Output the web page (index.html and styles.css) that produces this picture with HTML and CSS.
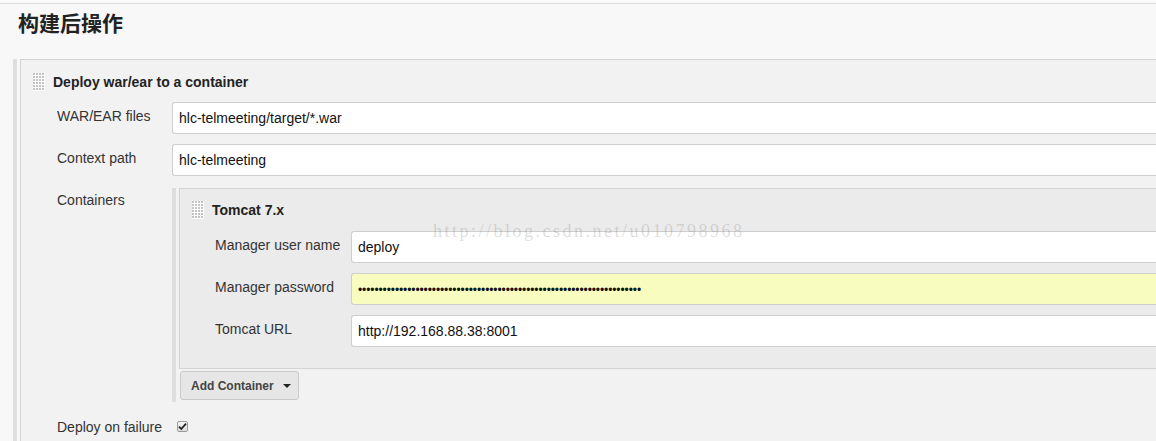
FILE: index.html
```html
<!DOCTYPE html>
<html>
<head>
<meta charset="utf-8">
<link rel="stylesheet" href="styles.css">
</head>
<body>
<div class="page">
  <div class="section-head">
    <h2 class="section-title">构建后操作</h2>
  </div>
  <div class="outer">
    <div class="block">
      <div class="block-head main-head">
        <span class="handle"></span>
        <span class="block-title">Deploy war/ear to a container</span>
      </div>
      <div class="row">
        <div class="label">WAR/EAR files</div>
        <div class="field"><div class="input">hlc-telmeeting/target/*.war</div></div>
      </div>
      <div class="row">
        <div class="label">Context path</div>
        <div class="field"><div class="input">hlc-telmeeting</div></div>
      </div>
      <div class="row row-containers">
        <div class="label">Containers</div>
        <div class="field">
          <div class="sub-outer">
            <div class="sub-block">
              <div class="block-head sub-head">
                <span class="handle"></span>
                <span class="block-title">Tomcat 7.x</span>
              </div>
              <div class="sub-row">
                <div class="sub-label">Manager user name</div>
                <div class="field"><div class="input">deploy</div></div>
              </div>
              <div class="sub-row">
                <div class="sub-label">Manager password</div>
                <div class="field"><div class="input input-pw"><span class="dots">•••••••••••••••••••••••••••••••••••••••••••••••••••••••••••••••••••••</span></div></div>
              </div>
              <div class="sub-row">
                <div class="sub-label">Tomcat URL</div>
                <div class="field"><div class="input">http://192.168.88.38:8001</div></div>
              </div>
            </div>
            <div class="btn-wrap">
              <button class="btn">Add Container <span class="caret"></span></button>
            </div>
          </div>
        </div>
      </div>
      <div class="row row-check">
        <div class="label">Deploy on failure</div>
        <div class="field">
          <span class="checkbox"><svg width="9" height="9" viewBox="0 0 9 9"><path d="M1 4.6 L3.3 7 L8 1.6" fill="none" stroke="#222" stroke-width="1.8"/></svg></span>
        </div>
      </div>
    </div>
  </div>
  <div class="watermark">http://blog.csdn.net/u010798968</div>
</div>
</body>
</html>
```

FILE: styles.css
```css
html, body {
  margin: 0;
  padding: 0;
  overflow: hidden;
  background: #fafafa;
}
.page {
  position: relative;
  width: 1200px;
  height: 441px;
  overflow: hidden;
  font-family: "Liberation Sans", Arial, sans-serif;
  font-size: 14px;
  color: #333;
  padding-top: 3px;
  box-sizing: border-box;
}
.section-head {
  border-top: 1px solid #dcdcdc;
  background: #f8f8f8;
  height: 56px;
  box-sizing: border-box;
  padding: 5px 0 0 18px;
}
.section-title {
  margin: 0;
  font-family: "Noto Sans CJK SC", sans-serif;
  font-size: 21px;
  font-weight: bold;
  line-height: 26px;
  color: #222;
}
.outer {
  background: #f8f8f8;
  padding-left: 13px;
  height: 400px;
}
.block {
  border-left: 4px solid #dedede;
  padding-left: 3px;
  height: 100%;
  box-sizing: border-box;
}
.block-head {
  display: flex;
  align-items: center;
  height: 18px;
}
.handle {
  width: 12px;
  height: 18px;
  flex: none;
  background-color: #fdfdfd;
  background-image: radial-gradient(circle at 1px 1px, #c4c4c4 0.9px, transparent 1.1px);
  background-size: 3px 3px;
}
.block-title {
  font-weight: bold;
  margin-left: 8px;
  color: #222;
  font-size: 14px;
}
.block > .block-head,
.block > .row {
  background: #f2f2f2;
  border-left: 1px solid #d3d3d3;
}
.block > .main-head {
  border-top: 1px solid #d3d3d3;
  padding: 13px 0 11px 12px;
}
.block > .row {
  display: flex;
  padding: 0 0 10px 36px;
}
.block > .row-containers {
  padding-top: 2px;
  padding-bottom: 0;
}
.row-containers > .label {
  padding-top: 4px;
}
.block > .row-check {
  padding-top: 17px;
  padding-bottom: 40px;
}
.label {
  width: 115px;
  flex: none;
  line-height: 16px;
  padding-top: 6px;
}
.field {
  flex: 1;
  min-width: 0;
}
.input {
  height: 32px;
  box-sizing: border-box;
  border: 1px solid #cfcfcf;
  border-right: none;
  border-radius: 3px 0 0 3px;
  background: #fff;
  padding: 0 6px;
  line-height: 30px;
  color: #111;
  white-space: nowrap;
}
.input-pw {
  background: #f8fdbf;
}
.dots {
  font-size: 12px;
  letter-spacing: -0.1px;
  color: #111;
}
.sub-outer {
  border-left: 4px solid #dedede;
  padding-left: 3px;
}
.sub-block {
  background: #ebebeb;
  border-left: 1px solid #d3d3d3;
  border-top: 1px solid #d3d3d3;
  border-bottom: 1px solid #d3d3d3;
  padding: 12px 0 21px 12px;
}
.sub-head {
  margin-bottom: 12px;
}
.sub-row {
  display: flex;
  margin-top: 10px;
}
.sub-head + .sub-row {
  margin-top: 0;
}
.sub-label {
  width: 159px;
  padding-left: 23px;
  flex: none;
  box-sizing: border-box;
  line-height: 16px;
  padding-top: 6px;
  white-space: nowrap;
}
.btn-wrap {
  padding: 2px 0 2px 1px;
}
.btn {
  font-family: "Liberation Sans", Arial, sans-serif;
  font-size: 12px;
  font-weight: bold;
  color: #444;
  background: #e6e6e6;
  border: 1px solid #cacaca;
  border-radius: 3px;
  height: 29px;
  width: 119px;
  padding: 0 0 0 10px;
  text-align: left;
  display: flex;
  align-items: center;
}
.caret {
  display: inline-block;
  width: 0;
  height: 0;
  border-left: 4px solid transparent;
  border-right: 4px solid transparent;
  border-top: 4px solid #222;
  margin-left: 9px;
  margin-top: 1px;
}
.row-check .label {
  padding-top: 0;
}
.checkbox {
  display: inline-flex;
  align-items: center;
  justify-content: center;
  width: 11px;
  height: 11px;
  box-sizing: border-box;
  border: 1px solid #9a9a9a;
  border-radius: 2px;
  background: linear-gradient(#f4f4f4, #dcdcdc);
  margin-left: 5px;
  margin-top: 2px;
  vertical-align: top;
}
.checkbox svg {
  display: block;
}
.watermark {
  position: absolute;
  left: 433px;
  top: 221px;
  font-family: "Liberation Serif", serif;
  font-size: 18px;
  letter-spacing: 2.5px;
  color: rgba(120, 120, 120, 0.25);
  white-space: nowrap;
  pointer-events: none;
}
```
